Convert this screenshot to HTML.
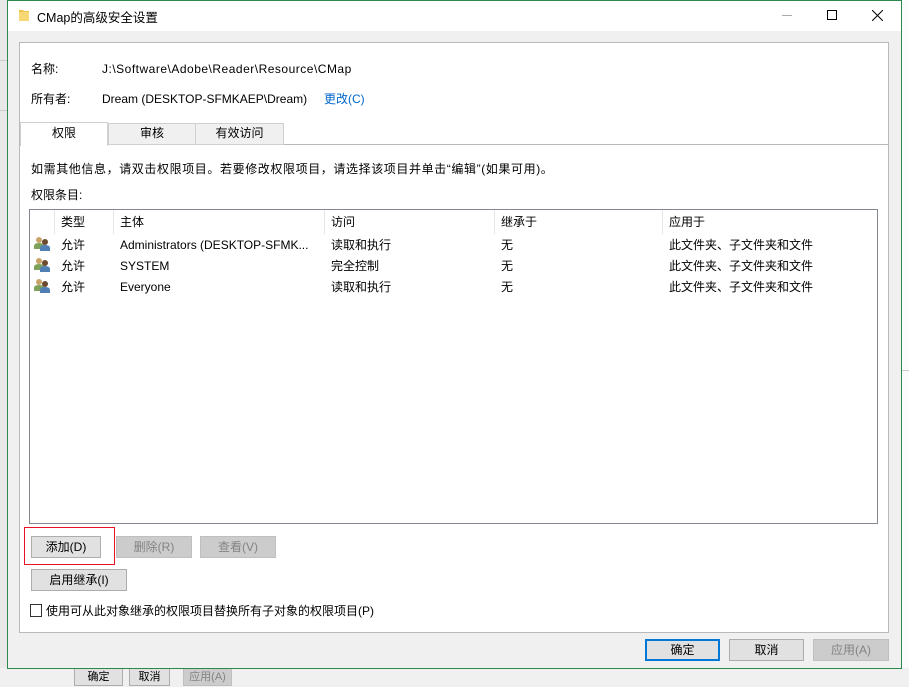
<!DOCTYPE html>
<html><head><meta charset="utf-8"><style>
*{margin:0;padding:0;box-sizing:border-box}
body{width:909px;height:677px;overflow:hidden;background:#f0f0f0;font-family:"Liberation Sans","Noto Sans CJK SC",sans-serif;font-size:12px;color:#000;position:relative}
.a{position:absolute;white-space:nowrap}
.btn{position:absolute;height:22px;background:#e1e1e1;border:1px solid #adadad;text-align:center;line-height:20px;font-size:12px}
.dis{color:#838383;background:#cccccc;border-color:#bfbfbf}
</style></head><body>
<div class="a" style="left:0;top:0;width:7px;height:677px;background:#e8e8e8"></div>
<div class="a" style="left:0;top:60px;width:7px;height:1px;background:#ccc"></div>
<div class="a" style="left:0;top:110px;width:7px;height:1px;background:#ccc"></div>
<div class="a" style="left:901px;top:0;width:8px;height:677px;background:#fbfbfb"></div>
<div class="a" style="left:901px;top:370px;width:8px;height:1px;background:#ccc"></div>
<div class="a" style="left:0;top:668px;width:909px;height:9px;background:#f0f0f0"></div>
<div class="btn" style="left:74px;top:666px;width:49px;height:20px;font-size:11px">确定</div>
<div class="btn" style="left:129px;top:666px;width:41px;height:20px;font-size:11px">取消</div>
<div class="btn dis" style="left:183px;top:666px;width:49px;height:20px;font-size:11px">应用(A)</div>
<div class="a" style="left:7px;top:0;width:895px;height:669px;border:1px solid #2b8a4b;background:#f0f0f0"></div>
<div class="a" style="left:8px;top:1px;width:893px;height:30px;background:#fff"></div>
<svg class="a" style="left:18px;top:8px" width="12" height="14"><path d="M1 2h4l1 1h5v10H1z" fill="#f2c34c"/><path d="M1 4h10v9H1z" fill="#f8d775"/></svg>
<div class="a" style="left:37px;top:7px;font-size:12.5px">CMap的高级安全设置</div>
<div class="a" style="left:782px;top:15px;width:10px;height:1px;background:#aaa"></div>
<div class="a" style="left:827px;top:10px;width:10px;height:10px;border:1px solid #000"></div>
<svg class="a" style="left:872px;top:10px" width="11" height="11"><path d="M0 0L11 11M11 0L0 11" stroke="#000" stroke-width="1"/></svg>
<div class="a" style="left:19px;top:42px;width:870px;height:591px;background:#fff;border:1px solid #b9b9b9"></div>
<div class="a" style="left:31px;top:60px">名称:</div>
<div class="a" style="left:102px;top:62px;letter-spacing:0.5px">J:\Software\Adobe\Reader\Resource\CMap</div>
<div class="a" style="left:31px;top:90px">所有者:</div>
<div class="a" style="left:102px;top:92px">Dream (DESKTOP-SFMKAEP\Dream)</div>
<div class="a" style="left:324px;top:90px;color:#0066cc">更改(C)</div>
<div class="a" style="left:20px;top:123px;width:868px;height:22px;background:#fff;border-bottom:1px solid #b9b9b9"></div>
<div class="a" style="left:108px;top:123px;width:88px;height:22px;background:#f0f0f0;border:1px solid #d0d0d0;text-align:center;line-height:19px">审核</div>
<div class="a" style="left:195px;top:123px;width:89px;height:22px;background:#f0f0f0;border:1px solid #d0d0d0;text-align:center;line-height:19px">有效访问</div>
<div class="a" style="left:20px;top:122px;width:88px;height:24px;background:#fff;border:1px solid #d0d0d0;border-bottom:none;text-align:center;line-height:20px">权限</div>
<div class="a" style="left:31px;top:160px;letter-spacing:0.6px">如需其他信息，请双击权限项目。若要修改权限项目，请选择该项目并单击“编辑”(如果可用)。</div>
<div class="a" style="left:31px;top:186px">权限条目:</div>
<div class="a" style="left:29px;top:209px;width:849px;height:315px;border:1px solid #828790;background:#fff"></div>
<div class="a" style="left:54px;top:210px;width:1px;height:24px;background:#e5e5e5"></div>
<div class="a" style="left:113px;top:210px;width:1px;height:24px;background:#e5e5e5"></div>
<div class="a" style="left:324px;top:210px;width:1px;height:24px;background:#e5e5e5"></div>
<div class="a" style="left:494px;top:210px;width:1px;height:24px;background:#e5e5e5"></div>
<div class="a" style="left:662px;top:210px;width:1px;height:24px;background:#e5e5e5"></div>
<div class="a" style="left:61px;top:213px">类型</div>
<div class="a" style="left:120px;top:213px">主体</div>
<div class="a" style="left:331px;top:213px">访问</div>
<div class="a" style="left:501px;top:213px">继承于</div>
<div class="a" style="left:669px;top:213px">应用于</div>
<div class="a" style="left:61px;top:236px">允许</div><div class="a" style="left:120px;top:238px">Administrators (DESKTOP-SFMK...</div><div class="a" style="left:331px;top:236px">读取和执行</div><div class="a" style="left:501px;top:236px">无</div><div class="a" style="left:669px;top:236px">此文件夹、子文件夹和文件</div>
<div class="a" style="left:61px;top:257px">允许</div><div class="a" style="left:120px;top:259px">SYSTEM</div><div class="a" style="left:331px;top:257px">完全控制</div><div class="a" style="left:501px;top:257px">无</div><div class="a" style="left:669px;top:257px">此文件夹、子文件夹和文件</div>
<div class="a" style="left:61px;top:278px">允许</div><div class="a" style="left:120px;top:280px">Everyone</div><div class="a" style="left:331px;top:278px">读取和执行</div><div class="a" style="left:501px;top:278px">无</div><div class="a" style="left:669px;top:278px">此文件夹、子文件夹和文件</div>
<svg class="a" style="left:34px;top:236px" width="16" height="60">
<g id="u"><circle cx="5" cy="4" r="3" fill="#c9a46a"/><path d="M0 13v-3q0-3 5-3t5 3v3z" fill="#7fa25a"/><circle cx="11" cy="6" r="3" fill="#6b4a2e"/><path d="M6 15v-3q0-3 5-3t5 3v3z" fill="#4f7fb5"/></g>
<use href="#u" y="21"/><use href="#u" y="42"/></svg>
<div class="a" style="left:24px;top:527px;width:91px;height:38px;border:1px solid #e81123"></div>
<div class="btn" style="left:31px;top:536px;width:70px">添加(D)</div>
<div class="btn dis" style="left:116px;top:536px;width:76px">删除(R)</div>
<div class="btn dis" style="left:200px;top:536px;width:76px">查看(V)</div>
<div class="btn" style="left:31px;top:569px;width:96px">启用继承(I)</div>
<div class="a" style="left:30px;top:604px;width:12px;height:13px;border:1px solid #333;background:#fff"></div>
<div class="a" style="left:46px;top:602px">使用可从此对象继承的权限项目替换所有子对象的权限项目(P)</div>
<div class="btn" style="left:645px;top:639px;width:75px;height:22px;border:2px solid #0078d7;line-height:18px">确定</div>
<div class="btn" style="left:729px;top:639px;width:75px">取消</div>
<div class="btn dis" style="left:813px;top:639px;width:76px">应用(A)</div>
</body></html>
